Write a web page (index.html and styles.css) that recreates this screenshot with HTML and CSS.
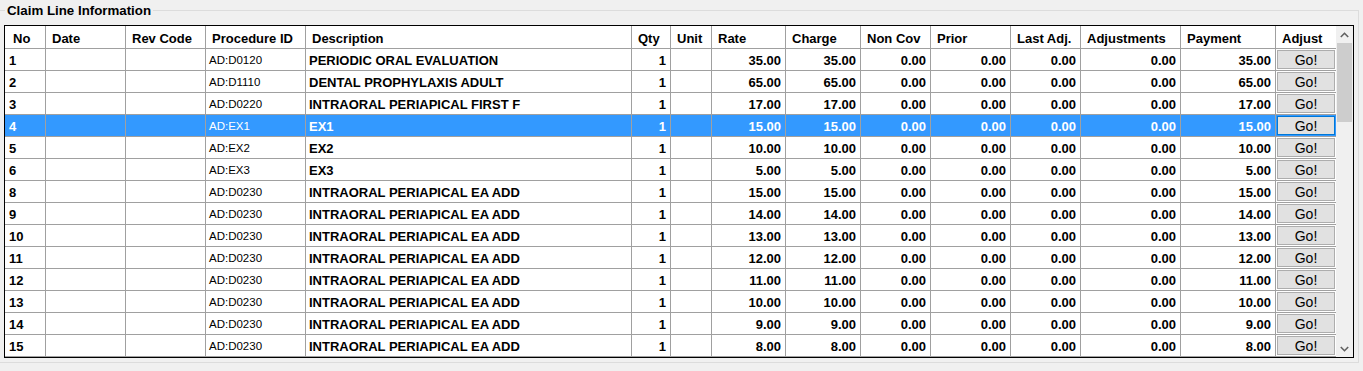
FILE: index.html
```html
<!DOCTYPE html>
<html lang="en">

<head>
    <meta charset="UTF-8">
    <title>Claim Line Information</title>
    <link rel="stylesheet" href="styles.css">
</head>

<body>

    <fieldset class="group">
        <legend>Claim Line Information</legend>

        <div class="grid-box">
            <div class="grid">
                <div class="row head">
                    <div class="cell first">No</div>
                    <div class="cell">Date</div>
                    <div class="cell">Rev Code</div>
                    <div class="cell">Procedure ID</div>
                    <div class="cell">Description</div>
                    <div class="cell">Qty</div>
                    <div class="cell">Unit</div>
                    <div class="cell">Rate</div>
                    <div class="cell">Charge</div>
                    <div class="cell">Non Cov</div>
                    <div class="cell">Prior</div>
                    <div class="cell">Last Adj.</div>
                    <div class="cell">Adjustments</div>
                    <div class="cell">Payment</div>
                    <div class="cell last">Adjust</div>
                </div>

                <div class="row">
                    <div class="cell first">1</div>
                    <div class="cell"></div>
                    <div class="cell"></div>
                    <div class="cell proc">AD:D0120</div>
                    <div class="cell">PERIODIC ORAL EVALUATION</div>
                    <div class="cell num">1</div>
                    <div class="cell"></div>
                    <div class="cell num">35.00</div>
                    <div class="cell num">35.00</div>
                    <div class="cell num">0.00</div>
                    <div class="cell num">0.00</div>
                    <div class="cell num">0.00</div>
                    <div class="cell num">0.00</div>
                    <div class="cell num">35.00</div>
                    <div class="cell last"><button class="go">Go!</button></div>
                </div>
                <div class="row">
                    <div class="cell first">2</div>
                    <div class="cell"></div>
                    <div class="cell"></div>
                    <div class="cell proc">AD:D1110</div>
                    <div class="cell">DENTAL PROPHYLAXIS ADULT</div>
                    <div class="cell num">1</div>
                    <div class="cell"></div>
                    <div class="cell num">65.00</div>
                    <div class="cell num">65.00</div>
                    <div class="cell num">0.00</div>
                    <div class="cell num">0.00</div>
                    <div class="cell num">0.00</div>
                    <div class="cell num">0.00</div>
                    <div class="cell num">65.00</div>
                    <div class="cell last"><button class="go">Go!</button></div>
                </div>
                <div class="row">
                    <div class="cell first">3</div>
                    <div class="cell"></div>
                    <div class="cell"></div>
                    <div class="cell proc">AD:D0220</div>
                    <div class="cell">INTRAORAL PERIAPICAL FIRST F</div>
                    <div class="cell num">1</div>
                    <div class="cell"></div>
                    <div class="cell num">17.00</div>
                    <div class="cell num">17.00</div>
                    <div class="cell num">0.00</div>
                    <div class="cell num">0.00</div>
                    <div class="cell num">0.00</div>
                    <div class="cell num">0.00</div>
                    <div class="cell num">17.00</div>
                    <div class="cell last"><button class="go">Go!</button></div>
                </div>
                <div class="row selected">
                    <div class="cell first">4</div>
                    <div class="cell"></div>
                    <div class="cell"></div>
                    <div class="cell proc">AD:EX1</div>
                    <div class="cell">EX1</div>
                    <div class="cell num">1</div>
                    <div class="cell"></div>
                    <div class="cell num">15.00</div>
                    <div class="cell num">15.00</div>
                    <div class="cell num">0.00</div>
                    <div class="cell num">0.00</div>
                    <div class="cell num">0.00</div>
                    <div class="cell num">0.00</div>
                    <div class="cell num">15.00</div>
                    <div class="cell last"><button class="go">Go!</button></div>
                </div>
                <div class="row">
                    <div class="cell first">5</div>
                    <div class="cell"></div>
                    <div class="cell"></div>
                    <div class="cell proc">AD:EX2</div>
                    <div class="cell">EX2</div>
                    <div class="cell num">1</div>
                    <div class="cell"></div>
                    <div class="cell num">10.00</div>
                    <div class="cell num">10.00</div>
                    <div class="cell num">0.00</div>
                    <div class="cell num">0.00</div>
                    <div class="cell num">0.00</div>
                    <div class="cell num">0.00</div>
                    <div class="cell num">10.00</div>
                    <div class="cell last"><button class="go">Go!</button></div>
                </div>
                <div class="row">
                    <div class="cell first">6</div>
                    <div class="cell"></div>
                    <div class="cell"></div>
                    <div class="cell proc">AD:EX3</div>
                    <div class="cell">EX3</div>
                    <div class="cell num">1</div>
                    <div class="cell"></div>
                    <div class="cell num">5.00</div>
                    <div class="cell num">5.00</div>
                    <div class="cell num">0.00</div>
                    <div class="cell num">0.00</div>
                    <div class="cell num">0.00</div>
                    <div class="cell num">0.00</div>
                    <div class="cell num">5.00</div>
                    <div class="cell last"><button class="go">Go!</button></div>
                </div>
                <div class="row">
                    <div class="cell first">8</div>
                    <div class="cell"></div>
                    <div class="cell"></div>
                    <div class="cell proc">AD:D0230</div>
                    <div class="cell">INTRAORAL PERIAPICAL EA ADD</div>
                    <div class="cell num">1</div>
                    <div class="cell"></div>
                    <div class="cell num">15.00</div>
                    <div class="cell num">15.00</div>
                    <div class="cell num">0.00</div>
                    <div class="cell num">0.00</div>
                    <div class="cell num">0.00</div>
                    <div class="cell num">0.00</div>
                    <div class="cell num">15.00</div>
                    <div class="cell last"><button class="go">Go!</button></div>
                </div>
                <div class="row">
                    <div class="cell first">9</div>
                    <div class="cell"></div>
                    <div class="cell"></div>
                    <div class="cell proc">AD:D0230</div>
                    <div class="cell">INTRAORAL PERIAPICAL EA ADD</div>
                    <div class="cell num">1</div>
                    <div class="cell"></div>
                    <div class="cell num">14.00</div>
                    <div class="cell num">14.00</div>
                    <div class="cell num">0.00</div>
                    <div class="cell num">0.00</div>
                    <div class="cell num">0.00</div>
                    <div class="cell num">0.00</div>
                    <div class="cell num">14.00</div>
                    <div class="cell last"><button class="go">Go!</button></div>
                </div>
                <div class="row">
                    <div class="cell first">10</div>
                    <div class="cell"></div>
                    <div class="cell"></div>
                    <div class="cell proc">AD:D0230</div>
                    <div class="cell">INTRAORAL PERIAPICAL EA ADD</div>
                    <div class="cell num">1</div>
                    <div class="cell"></div>
                    <div class="cell num">13.00</div>
                    <div class="cell num">13.00</div>
                    <div class="cell num">0.00</div>
                    <div class="cell num">0.00</div>
                    <div class="cell num">0.00</div>
                    <div class="cell num">0.00</div>
                    <div class="cell num">13.00</div>
                    <div class="cell last"><button class="go">Go!</button></div>
                </div>
                <div class="row">
                    <div class="cell first">11</div>
                    <div class="cell"></div>
                    <div class="cell"></div>
                    <div class="cell proc">AD:D0230</div>
                    <div class="cell">INTRAORAL PERIAPICAL EA ADD</div>
                    <div class="cell num">1</div>
                    <div class="cell"></div>
                    <div class="cell num">12.00</div>
                    <div class="cell num">12.00</div>
                    <div class="cell num">0.00</div>
                    <div class="cell num">0.00</div>
                    <div class="cell num">0.00</div>
                    <div class="cell num">0.00</div>
                    <div class="cell num">12.00</div>
                    <div class="cell last"><button class="go">Go!</button></div>
                </div>
                <div class="row">
                    <div class="cell first">12</div>
                    <div class="cell"></div>
                    <div class="cell"></div>
                    <div class="cell proc">AD:D0230</div>
                    <div class="cell">INTRAORAL PERIAPICAL EA ADD</div>
                    <div class="cell num">1</div>
                    <div class="cell"></div>
                    <div class="cell num">11.00</div>
                    <div class="cell num">11.00</div>
                    <div class="cell num">0.00</div>
                    <div class="cell num">0.00</div>
                    <div class="cell num">0.00</div>
                    <div class="cell num">0.00</div>
                    <div class="cell num">11.00</div>
                    <div class="cell last"><button class="go">Go!</button></div>
                </div>
                <div class="row">
                    <div class="cell first">13</div>
                    <div class="cell"></div>
                    <div class="cell"></div>
                    <div class="cell proc">AD:D0230</div>
                    <div class="cell">INTRAORAL PERIAPICAL EA ADD</div>
                    <div class="cell num">1</div>
                    <div class="cell"></div>
                    <div class="cell num">10.00</div>
                    <div class="cell num">10.00</div>
                    <div class="cell num">0.00</div>
                    <div class="cell num">0.00</div>
                    <div class="cell num">0.00</div>
                    <div class="cell num">0.00</div>
                    <div class="cell num">10.00</div>
                    <div class="cell last"><button class="go">Go!</button></div>
                </div>
                <div class="row">
                    <div class="cell first">14</div>
                    <div class="cell"></div>
                    <div class="cell"></div>
                    <div class="cell proc">AD:D0230</div>
                    <div class="cell">INTRAORAL PERIAPICAL EA ADD</div>
                    <div class="cell num">1</div>
                    <div class="cell"></div>
                    <div class="cell num">9.00</div>
                    <div class="cell num">9.00</div>
                    <div class="cell num">0.00</div>
                    <div class="cell num">0.00</div>
                    <div class="cell num">0.00</div>
                    <div class="cell num">0.00</div>
                    <div class="cell num">9.00</div>
                    <div class="cell last"><button class="go">Go!</button></div>
                </div>
                <div class="row">
                    <div class="cell first">15</div>
                    <div class="cell"></div>
                    <div class="cell"></div>
                    <div class="cell proc">AD:D0230</div>
                    <div class="cell">INTRAORAL PERIAPICAL EA ADD</div>
                    <div class="cell num">1</div>
                    <div class="cell"></div>
                    <div class="cell num">8.00</div>
                    <div class="cell num">8.00</div>
                    <div class="cell num">0.00</div>
                    <div class="cell num">0.00</div>
                    <div class="cell num">0.00</div>
                    <div class="cell num">0.00</div>
                    <div class="cell num">8.00</div>
                    <div class="cell last"><button class="go">Go!</button></div>
                </div>
            </div>

            <!-- vertical scrollbar -->
            <div class="vscroll">
                <div class="arrow">
                    <svg width="9" height="6" viewBox="0 0 9 6"><polyline points="0.8,5 4.5,1.3 8.2,5" fill="none" stroke="#606060" stroke-width="1.6"/></svg>
                </div>
                <div class="track">
                    <div class="thumb"></div>
                </div>
                <div class="arrow">
                    <svg width="9" height="6" viewBox="0 0 9 6"><polyline points="0.8,1 4.5,4.7 8.2,1" fill="none" stroke="#606060" stroke-width="1.6"/></svg>
                </div>
            </div>
        </div>
    </fieldset>

</body>

</html>
```

FILE: styles.css
```css
* {
    box-sizing: border-box;
}

body {
    margin: 0;
    background-color: #f0f0f0;
    font-family: "Liberation Sans", Arial, sans-serif;
    font-size: 13px;
    color: #000;
}

/* group box */
.group {
    margin: 2px 4px 0 -2px;
    padding: 6px 4px 4px 5px;
    border: 1px solid #dcdcdc;
    min-inline-size: 0;
}

.group legend {
    margin-left: 1px;
    padding: 1px 2px 0;
    font-weight: bold;
    font-size: 13.3px;
    line-height: 16px;
}

.grid-box {
    display: flex;
    height: 333px;
    border: 1px solid #000;
    background-color: #fff;
}

.grid {
    width: 1331px;
    overflow: hidden;
}

.row {
    display: grid;
    grid-template-columns: 41px 80px 80px 100px 326px 39px 41px 74px 75px 70px 80px 70px 100px 95px 60px;
    height: 22px;
    font-weight: bold;
}

.cell {
    display: flex;
    align-items: center;
    padding: 1px 3px 0;
    border-right: 1px solid #a0a0a0;
    border-bottom: 1px solid #a0a0a0;
    white-space: nowrap;
    overflow: hidden;
}

.cell.first {
    padding-left: 4px;
}

.cell.last {
    border-right: none;
    padding: 1px;
}

.head {
    height: 23px;
}

.head .cell {
    padding: 2px 6px 0;
}

.head .cell.first {
    padding-left: 8px;
}

.num {
    justify-content: flex-end;
    padding-right: 4px;
}

.proc {
    font-weight: normal;
    font-size: 11.5px;
}

.selected .cell {
    background-color: #3399ff;
    color: #fff;
}

.go {
    width: 100%;
    height: 100%;
    margin: 0;
    padding: 1px 0 0;
    border: 1px solid #adadad;
    background-color: #e1e1e1;
    font-family: "Liberation Sans", Arial, sans-serif;
    font-size: 14px;
    color: #000;
}

.selected .go {
    border-color: #0078d7;
}

/* scrollbar */
.vscroll {
    width: 17px;
    display: flex;
    flex-direction: column;
    background-color: #f0f0f0;
}

.arrow {
    height: 17px;
    display: flex;
    align-items: center;
    justify-content: center;
}

.track {
    flex: 1;
}

.thumb {
    height: 79px;
    margin: 0 1px;
    background-color: #cdcdcd;
}
```
